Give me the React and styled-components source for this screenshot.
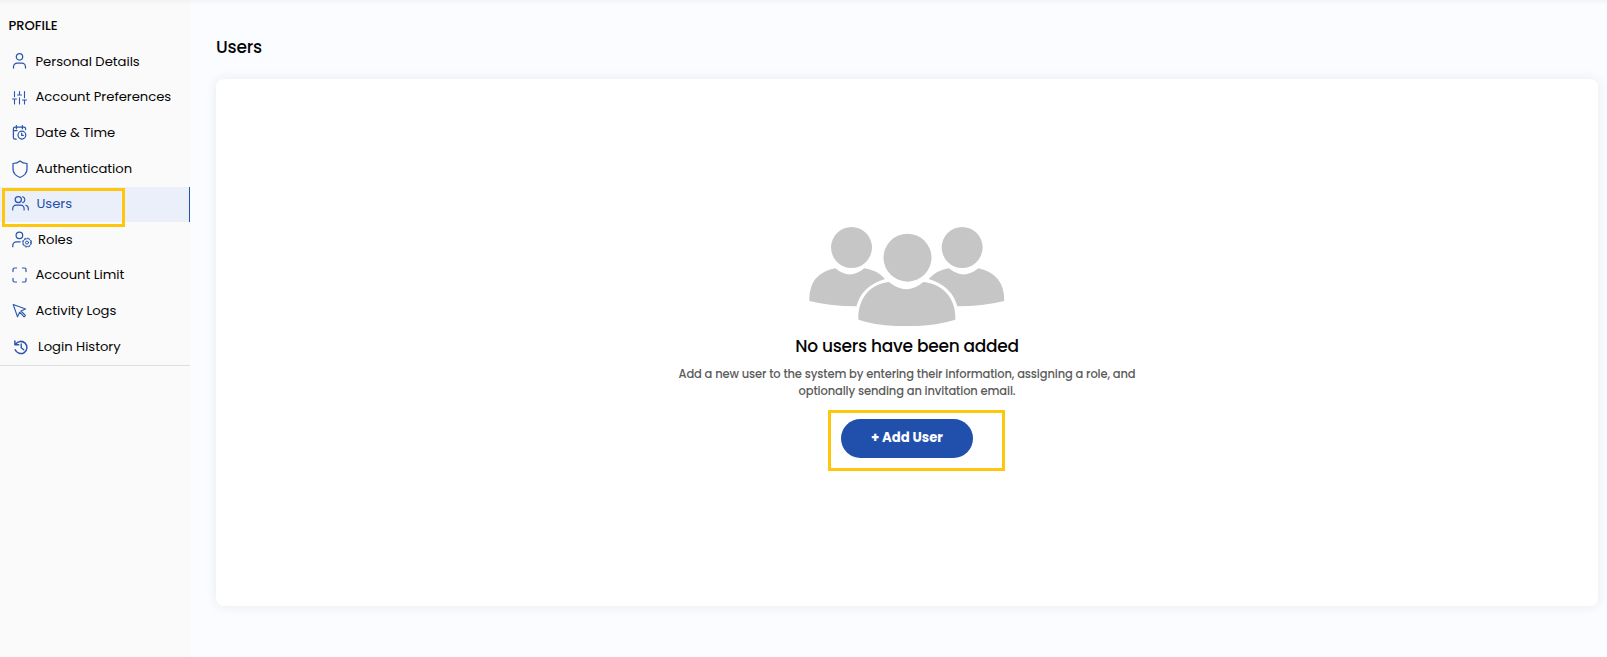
import React from 'react';
import styled, { createGlobalStyle } from 'styled-components';

const GlobalStyle = createGlobalStyle`
  * { box-sizing: border-box; }
  body {
    margin: 0;
    font-family: Poppins, Inter, 'Open Sans', sans-serif;
    color: #060606;
    background: #fbfcff;
    overflow: hidden;
  }
`;

const Page = styled.div`
  position: relative;
  display: flex;
  height: 657px;
  background: #fbfcff;
`;

const TopShade = styled.div`
  position: absolute;
  inset: 0 0 auto 0;
  height: 5px;
  background: linear-gradient(rgba(0, 0, 0, 0.035), rgba(0, 0, 0, 0));
`;

const Sidebar = styled.aside`
  width: 190px;
  flex: none;
  background: #fafafa;
`;

const SidebarTitle = styled.h2`
  margin: 0;
  height: 44.5px;
  padding: 16px 0 0 8.5px;
  font-size: 13.1px;
  line-height: 20px;
  font-weight: 500;
`;

const Nav = styled.nav`
  border-bottom: 1px solid #dedede;
`;

const NavItem = styled.a`
  position: relative;
  display: flex;
  align-items: center;
  height: 35.6px;
  padding-left: 12px;
  color: ${(p) => (p.$active ? '#2350ab' : '#060606')};
  background: ${(p) => (p.$active ? '#eaeff9' : 'transparent')};
  border-right: ${(p) => (p.$active ? '1px solid #2350ab' : '0')};
`;

const NavIcon = styled.svg`
  flex: none;
  width: ${(p) => p.$w}px;
  height: 20px;
  margin-bottom: ${(p) => p.$lift || 0}px;
  fill: none;
  stroke: #2a56b0;
  stroke-width: 1.25;
  stroke-linecap: round;
  stroke-linejoin: round;
`;

const NavLabel = styled.span`
  padding-left: ${(p) => p.$gap}px;
  font-size: 13.2px;
  line-height: 20px;
  letter-spacing: -0.035px;
  margin-bottom: 0.8px;
  white-space: nowrap;
`;

const Highlight = styled.span`
  position: absolute;
  left: ${(p) => p.$x}px;
  top: ${(p) => p.$y}px;
  width: ${(p) => p.$w}px;
  height: ${(p) => p.$h}px;
  border: 3px solid #ffc60e;
  pointer-events: none;
`;

const Main = styled.main`
  flex: 1;
  padding: 35px 9px 0 26px;
`;

const PageTitle = styled.h1`
  margin: 0 0 20px;
  font-size: 17px;
  line-height: 24px;
  font-weight: 500;
  letter-spacing: -0.2px;
`;

const Card = styled.section`
  display: flex;
  flex-direction: column;
  align-items: center;
  height: 527px;
  padding-top: 148px;
  border-radius: 8px;
  background: #fff;
  box-shadow: 0 0 12px rgba(30, 40, 60, 0.09);
`;

const Illustration = styled.svg`
  width: 196px;
  height: 99.3px;
  margin-right: 1px;
  fill: #c6c6c6;
`;

const EmptyTitle = styled.h3`
  margin: 7.7px 0 0;
  font-size: 17px;
  line-height: 24px;
  font-weight: 500;
  letter-spacing: -0.26px;
`;

const EmptyText = styled.p`
  margin: 8.3px 0 0;
  font-size: 11.5px;
  line-height: 17px;
  font-weight: 500;
  color: #5b5b5b;
  text-align: center;
  white-space: nowrap;
  letter-spacing: -0.125px;
`;

const Action = styled.div`
  position: relative;
  margin-top: 18.7px;
`;

const AddButton = styled.button`
  display: block;
  width: 132px;
  height: 39px;
  padding: 0 0 1px;
  border: 0;
  border-radius: 20px;
  background: #2150ac;
  color: #fff;
  font: inherit;
  font-size: 13.2px;
  font-weight: 700;
`;

const icons = {
  person: (
    <>
      <circle cx="7.5" cy="5.8" r="3.2" />
      <path d="M1.5 17v-1.3a3.7 3.7 0 0 1 3.7-3.7h4.6a3.7 3.7 0 0 1 3.7 3.7V17" />
    </>
  ),
  sliders: (
    <path strokeWidth="1.1" d="M2.5 16v-4.5M2.5 8.7V3.5M7.5 16v-6.2M7.5 7V3.5M12.5 16v-3.5M12.5 9.7V3.5M.5 11h4M5.5 7h4M10.5 12h4" />
  ),
  calendar: (
    <>
      <path d="M4.2 16.2H3a1.6 1.6 0 0 1-1.6-1.6V5.8A1.6 1.6 0 0 1 3 4.2h9a1.6 1.6 0 0 1 1.6 1.6V6.6M4.4 2.6v3.2M10.4 2.6v3.2M1.4 7.7h3.6" />
      <circle cx="9.9" cy="12.1" r="3.9" />
      <path d="M9.7 10.2v2.2h1.6" />
    </>
  ),
  shield: (
    <path d="M8 2c2 1.7 4.3 2.4 7 2.5v5.6c0 4-2.7 6.8-7 8.4-4.3-1.6-7-4.4-7-8.4V4.5C3.7 4.4 6 3.7 8 2z" />
  ),
  users: (
    <>
      <circle cx="6.3" cy="6.6" r="3.1" />
      <path d="M.7 16.9v-1.5a3.3 3.3 0 0 1 3.3-3.3h4.8a3.3 3.3 0 0 1 3.3 3.3v1.5M10.7 3.7a3.1 3.1 0 0 1 0 5.9M16.3 16.9v-1.5a3.3 3.3 0 0 0-2.5-3.2" strokeWidth="1.15" />
    </>
  ),
  roles: (
    <>
      <circle cx="7.4" cy="5.3" r="3.3" />
      <path d="M.8 16.7v-1.3A3.6 3.6 0 0 1 4.4 11.8h3.8" />
      <circle cx="15" cy="12.6" r="4.5" strokeWidth="1" strokeLinecap="butt" strokeDasharray="2.1 1.434" />
      <circle cx="15" cy="12.6" r="3.9" strokeWidth=".8" />
      <circle cx="15" cy="12.6" r="1.5" strokeWidth="1" />
    </>
  ),
  limit: (
    <path strokeWidth="1.2" d="M1 6.6V4.5A1.5 1.5 0 0 1 2.5 3h2.1M10.4 3h2.1A1.5 1.5 0 0 1 14 4.5v2.1M14 13.4v2.1a1.5 1.5 0 0 1-1.5 1.5h-2.1M4.6 17H2.5A1.5 1.5 0 0 1 1 15.5v-2.1" />
  ),
  cursor: (
    <path strokeWidth="1.1" d="M1.2 3.5l4.3 12.2 2.1-4.5 4.5 4.6 1.3-1.3-4.5-4.5 4.7-2.1z" />
  ),
  history: (
    <>
      <path strokeWidth="1.5" d="M3.7 7.2A6.1 6.1 0 1 1 3.2 12.8M2.9 4v3.7h3.8" />
      <path strokeWidth="1.4" d="M9.2 6.9v3.8l2.5 2" />
    </>
  ),
};

const items = [
  { label: 'Personal Details', icon: 'person', w: 15, gap: 8.5, lift: 2 },
  { label: 'Account Preferences', icon: 'sliders', w: 15, gap: 8.5 },
  { label: 'Date & Time', icon: 'calendar', w: 15, gap: 8.5 },
  { label: 'Authentication', icon: 'shield', w: 16, gap: 7.5 },
  { label: 'Users', icon: 'users', w: 17, gap: 7.5, lift: 3, active: true },
  { label: 'Roles', icon: 'roles', w: 20, gap: 6 },
  { label: 'Account Limit', icon: 'limit', w: 15, gap: 8.5, lift: 2 },
  { label: 'Activity Logs', icon: 'cursor', w: 15, gap: 8.5, lift: 1 },
  { label: 'Login History', icon: 'history', w: 17, gap: 9 },
];

export default function App() {
  return (
    <>
      <GlobalStyle />
      <Page>
        <Sidebar>
          <SidebarTitle>PROFILE</SidebarTitle>
          <Nav>
            {items.map((it) => (
              <NavItem key={it.label} $active={it.active}>
                <NavIcon $w={it.w} $lift={it.lift} viewBox={`0 0 ${it.w} 20`}>
                  {icons[it.icon]}
                </NavIcon>
                <NavLabel $gap={it.gap}>{it.label}</NavLabel>
                {it.active && <Highlight $x={2} $y={1} $w={123} $h={39} />}
              </NavItem>
            ))}
          </Nav>
        </Sidebar>
        <Main>
          <PageTitle>Users</PageTitle>
          <Card>
            <Illustration viewBox="86 50 588 298">
              <circle cx="213.5" cy="111.5" r="61.5" />
              <circle cx="545.5" cy="111.5" r="61.5" />
              <circle cx="381.5" cy="142" r="72" />
              <path d="M165 174Q208 211 252 174Q288 178 314 206Q244 227 228 288Q152 288 87 272Q84 190 165 174z" />
              <path d="M594 174Q550 211 506 174Q472 178 445 206Q515 227 531 288Q607 288 672 272Q672 190 594 174z" />
              <path d="M326 215Q378 259 429 215C488 220 528 265 525 328Q460 348 379 348Q296 348 234 328C232 265 270 220 326 215z" />
            </Illustration>
            <EmptyTitle>No users have been added</EmptyTitle>
            <EmptyText>
              Add a new user to the system by entering their information, assigning a role, and
              <br />
              optionally sending an invitation email.
            </EmptyText>
            <Action>
              <AddButton>+ Add User</AddButton>
              <Highlight $x={-13} $y={-9} $w={177} $h={61} />
            </Action>
          </Card>
        </Main>
        <TopShade />
      </Page>
    </>
  );
}
